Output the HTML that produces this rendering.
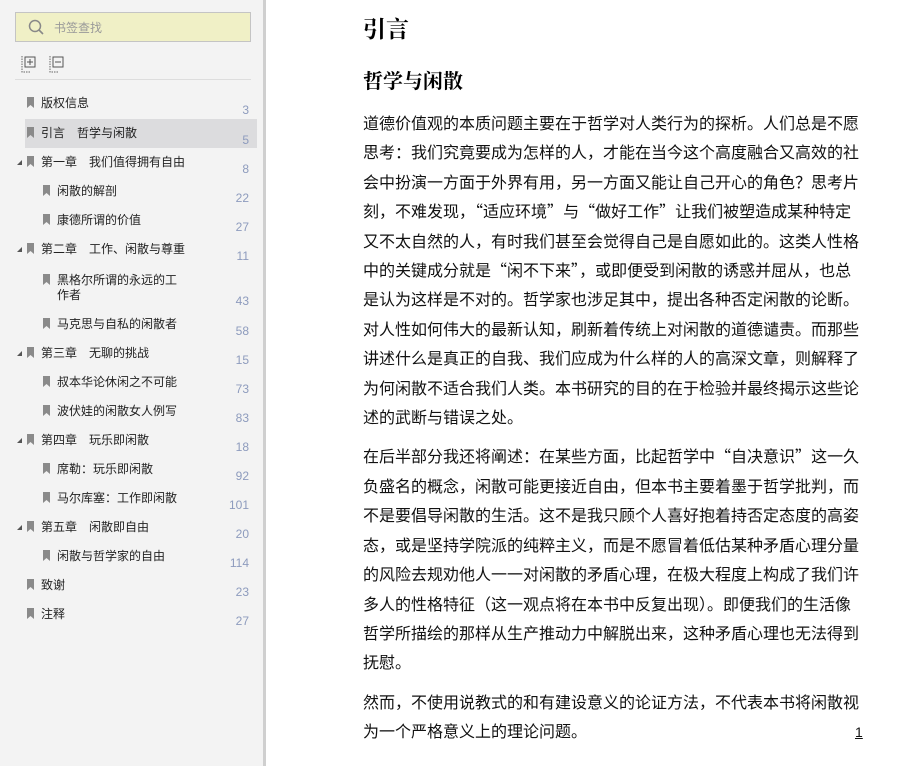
<!DOCTYPE html>
<html><head><meta charset="utf-8"><style>
*{margin:0;padding:0;box-sizing:border-box}
body{width:914px;height:766px;overflow:hidden;background:#fff;font-family:"Liberation Sans","Noto Sans CJK SC",sans-serif;position:relative}
#side{position:absolute;left:0;top:0;width:263px;height:766px;background:#f3f3f3}
#bar{position:absolute;left:263px;top:0;width:3px;height:766px;background:#cfcfcf}
#search{position:absolute;left:15px;top:12px;width:236px;height:30px;background:#f0f0c6;border:1px solid #c4c4c4}
#search span{position:absolute;left:38px;top:6px;font-size:12px;color:#999}
.hl{position:absolute;left:25px;top:119px;width:232px;height:29px;background:#dcdcde}
.it{position:absolute;font-size:12px;color:#222;white-space:nowrap;line-height:15px}
.pg{position:absolute;right:14px;font-size:12px;color:#8d9bbd;width:40px;text-align:right}
.bm{position:absolute;width:7px;height:11px}
.tri{position:absolute;left:17px;width:0;height:0;border-left:5px solid transparent;border-bottom:5px solid #555}
#main{position:absolute;left:363px;top:0;width:520px;color:#111}
p{font-size:16px;line-height:29.4px;margin-bottom:10px;white-space:nowrap}
q{quotes:none;font-family:"Noto Sans CJK SC",sans-serif;line-height:0}
h1{position:absolute;left:363px;top:11px;font-size:23px;font-weight:bold;font-family:"Liberation Serif","Noto Serif CJK SC",serif}
h2{position:absolute;left:363px;top:65px;font-size:20px;font-weight:bold;font-family:"Liberation Serif","Noto Serif CJK SC",serif}
</style></head><body>
<div id="side">
<div id="search"><svg width="20" height="20" style="position:absolute;left:11px;top:5px" viewBox="0 0 20 20"><circle cx="8" cy="8" r="5.5" fill="none" stroke="#888" stroke-width="1.5"/><line x1="12" y1="12" x2="16" y2="16" stroke="#888" stroke-width="1.6"/></svg><span>书签查找</span></div>
<svg width="60" height="18" style="position:absolute;left:21px;top:55px" viewBox="0 0 60 18"><path d="M1 1v16h8" stroke="#666" stroke-dasharray="1.5 1" fill="none"/><rect x="4" y="2" width="10" height="10" fill="none" stroke="#555"/><path d="M6 7h6M9 4v6" stroke="#555"/><path d="M29 1v16h8" stroke="#666" stroke-dasharray="1.5 1" fill="none"/><rect x="32" y="2" width="10" height="10" fill="none" stroke="#555"/><path d="M34 7h6" stroke="#555"/></svg>
<div style="position:absolute;left:15px;top:79px;width:236px;height:1px;background:#ddd"></div>
<div class="hl"></div>
</div>
<div id="bar"></div>
<div id="items"></div>
<script>
var d=[[0,"版权信息","3",103],[0,"引言　哲学与闲散","5",133],[1,"第一章　我们值得拥有自由","8",162],[2,"闲散的解剖","22",191],[2,"康德所谓的价值","27",220],[1,"第二章　工作、闲散与尊重","11",249],[2,"黑格尔所谓的永远的工<br>作者","43",280],[2,"马克思与自私的闲散者","58",324],[1,"第三章　无聊的挑战","15",353],[2,"叔本华论休闲之不可能","73",382],[2,"波伏娃的闲散女人例写","83",411],[1,"第四章　玩乐即闲散","18",440],[2,"席勒：玩乐即闲散","92",469],[2,"马尔库塞：工作即闲散","101",498],[1,"第五章　闲散即自由","20",527],[2,"闲散与哲学家的自由","114",556],[0,"致谢","23",585],[0,"注释","27",614]];
var h="";d.forEach(function(r){var lv=r[0],y=r[3];var ix=lv==2?43:27,tx=lv==2?57:41;
if(lv==1)h+='<div class="tri" style="top:'+(y-2)+'px"></div>';
h+='<svg class="bm" style="left:'+ix+'px;top:'+(y-6)+'px" viewBox="0 0 7 11"><path d="M0 0h7v11l-3.5-3L0 11z" fill="#8a8a8a"/></svg>';
h+='<div class="it" style="left:'+tx+'px;top:'+(y-7)+'px">'+r[1]+'</div>';
var py=r[1].indexOf("<br>")>0?y+14:y;
h+='<div class="pg" style="left:209px;top:'+(py)+'px">'+r[2]+'</div>';});
document.getElementById("items").innerHTML=h;
</script>
<h1>引言</h1>
<h2>哲学与闲散</h2>
<div id="main" style="top:110px">
<p>道德价值观的本质问题主要在于哲学对人类行为的探析。人们总是不愿<br>思考：我们究竟要成为怎样的人，才能在当今这个高度融合又高效的社<br>会中扮演一方面于外界有用，另一方面又能让自己开心的角色？思考片<br>刻，不难发现，<q>“</q>适应环境<q>”</q>与<q>“</q>做好工作<q>”</q>让我们被塑造成某种特定<br>又不太自然的人，有时我们甚至会觉得自己是自愿如此的。这类人性格<br>中的关键成分就是<q>“</q>闲不下来<q>”</q>，或即便受到闲散的诱惑并屈从，也总<br>是认为这样是不对的。哲学家也涉足其中，提出各种否定闲散的论断。<br>对人性如何伟大的最新认知，刷新着传统上对闲散的道德谴责。而那些<br>讲述什么是真正的自我、我们应成为什么样的人的高深文章，则解释了<br>为何闲散不适合我们人类。本书研究的目的在于检验并最终揭示这些论<br>述的武断与错误之处。</p>
<p>在后半部分我还将阐述：在某些方面，比起哲学中<q>“</q>自决意识<q>”</q>这一久<br>负盛名的概念，闲散可能更接近自由，但本书主要着墨于哲学批判，而<br>不是要倡导闲散的生活。这不是我只顾个人喜好抱着持否定态度的高姿<br>态，或是坚持学院派的纯粹主义，而是不愿冒着低估某种矛盾心理分量<br>的风险去规劝他人一一对闲散的矛盾心理，在极大程度上构成了我们许<br>多人的性格特征（这一观点将在本书中反复出现）。即便我们的生活像<br>哲学所描绘的那样从生产推动力中解脱出来，这种矛盾心理也无法得到<br>抚慰。</p>
<p>然而，不使用说教式的和有建设意义的论证方法，不代表本书将闲散视<br>为一个严格意义上的理论问题。</p>
</div>
<div style="position:absolute;left:855px;top:724px;font-size:14px;text-decoration:underline;color:#111">1</div>
</body></html>
